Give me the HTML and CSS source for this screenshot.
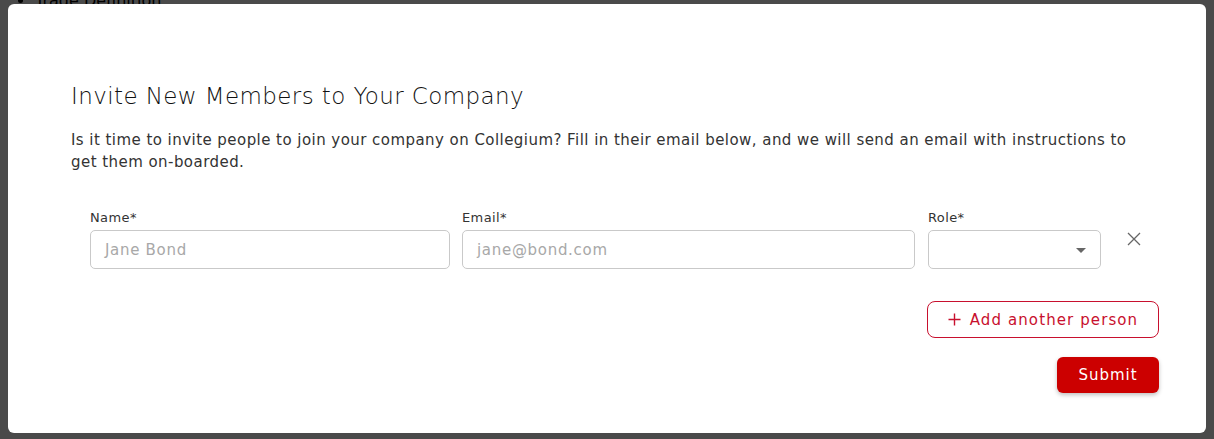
FILE: index.html
```html
<!DOCTYPE html>
<html lang="en">
<head>
<meta charset="utf-8">
<title>Invite New Members</title>
<link rel="stylesheet" href="styles.css">
</head>
<body>
<div class="page">
  <ul class="page-list">
    <li>Trade Definition:</li>
  </ul>
</div>
<div class="overlay"></div>
<div class="modal">
  <h2 class="modal-title">Invite New Members to Your Company</h2>
  <p class="modal-text">Is it time to invite people to join your company on Collegium? Fill in their email below, and we will send an email with instructions to get them on-boarded.</p>
  <div class="form">
    <div class="row">
      <div class="field field-name">
        <label class="label">Name*</label>
        <div class="input"><span class="placeholder">Jane Bond</span></div>
      </div>
      <div class="field field-email">
        <label class="label">Email*</label>
        <div class="input"><span class="placeholder">jane@bond.com</span></div>
      </div>
      <div class="field field-role">
        <label class="label">Role*</label>
        <div class="input select"><span class="caret"></span></div>
      </div>
      <div class="remove">
        <svg width="16" height="16" viewBox="0 0 16 16"><path d="M2 2 L14 14 M14 2 L2 14" stroke="#666" stroke-width="1.3" fill="none"/></svg>
      </div>
    </div>
    <div class="actions">
      <button class="btn-outline">
        <svg width="13" height="13" viewBox="0 0 13 13"><path d="M6.5 0.5 V12.5 M0.5 6.5 H12.5" stroke="#c8102e" stroke-width="1.4" fill="none"/></svg>
        <span>Add another person</span>
      </button>
      <button class="btn-primary">Submit</button>
    </div>
  </div>
</div>
</body>
</html>
```
FILE: styles.css
```css
html, body {
  margin: 0;
  padding: 0;
  height: 100%;
}
body {
  background: #ffffff;
  font-family: "DejaVu Sans", "Open Sans", sans-serif;
  overflow: hidden;
}
.page-list {
  margin: -9px 0 0 0;
  padding-left: 35px;
  font-size: 16px;
  color: #000;
}
.overlay {
  position: fixed;
  inset: 0;
  background: rgba(0, 0, 0, 0.71);
}
.modal {
  position: fixed;
  left: 8px;
  top: 4px;
  width: 1198px;
  height: 429px;
  box-sizing: border-box;
  background: #fff;
  border-radius: 6px;
  padding: 77px 48px 0 63px;
  color: #222;
}
.modal-title {
  margin: 0;
  font-size: 23px;
  line-height: 30px;
  font-weight: 300;
  letter-spacing: 0.4px;
  color: #111;
}
.modal-text {
  margin: 18px 0 0 0;
  width: 1070px;
  font-size: 15px;
  line-height: 22px;
  letter-spacing: 0.45px;
  color: #333;
}
.form {
  padding-left: 19px;
  margin-top: 37px;
}
.row {
  display: flex;
  align-items: flex-start;
}
.field {
  display: flex;
  flex-direction: column;
  gap: 4px;
}
.field-name { width: 360px; margin-right: 12px; }
.field-email { width: 453px; margin-right: 13px; }
.field-role { width: 173px; }
.label {
  font-size: 13px;
  line-height: 16px;
  letter-spacing: 0.4px;
  color: #333;
}
.input {
  height: 39px;
  box-sizing: border-box;
  border: 1px solid #c9c9c9;
  border-radius: 5px;
  display: flex;
  align-items: center;
  padding: 0 14px;
}
.placeholder {
  font-size: 15px;
  letter-spacing: 0.7px;
  color: #a8a8a8;
}
.select {
  justify-content: flex-end;
  padding-right: 14px;
}
.caret {
  width: 0;
  height: 0;
  border-left: 5px solid transparent;
  border-right: 5px solid transparent;
  border-top: 5px solid #666;
  margin-top: 1px;
}
.remove {
  flex: 1;
  display: flex;
  padding-left: 25px;
  padding-top: 21px;
}
.actions {
  display: flex;
  flex-direction: column;
  align-items: flex-end;
  margin-top: 32px;
  gap: 19px;
  margin-right: -1px;
}
.btn-outline {
  display: flex;
  align-items: center;
  gap: 9px;
  height: 37px;
  width: 232px;
  justify-content: center;
  background: #fff;
  border: 1px solid #c8102e;
  border-radius: 8px;
  color: #c8102e;
  font-family: inherit;
  font-size: 15px;
  letter-spacing: 1.1px;
  padding: 0 10px;
}
.btn-primary {
  height: 36px;
  width: 102px;
  background: #cc0000;
  border: none;
  border-radius: 6px;
  color: #fff;
  font-family: inherit;
  font-size: 15px;
  letter-spacing: 1px;
  box-shadow: 0 2px 4px rgba(0, 0, 0, 0.25);
}
```
